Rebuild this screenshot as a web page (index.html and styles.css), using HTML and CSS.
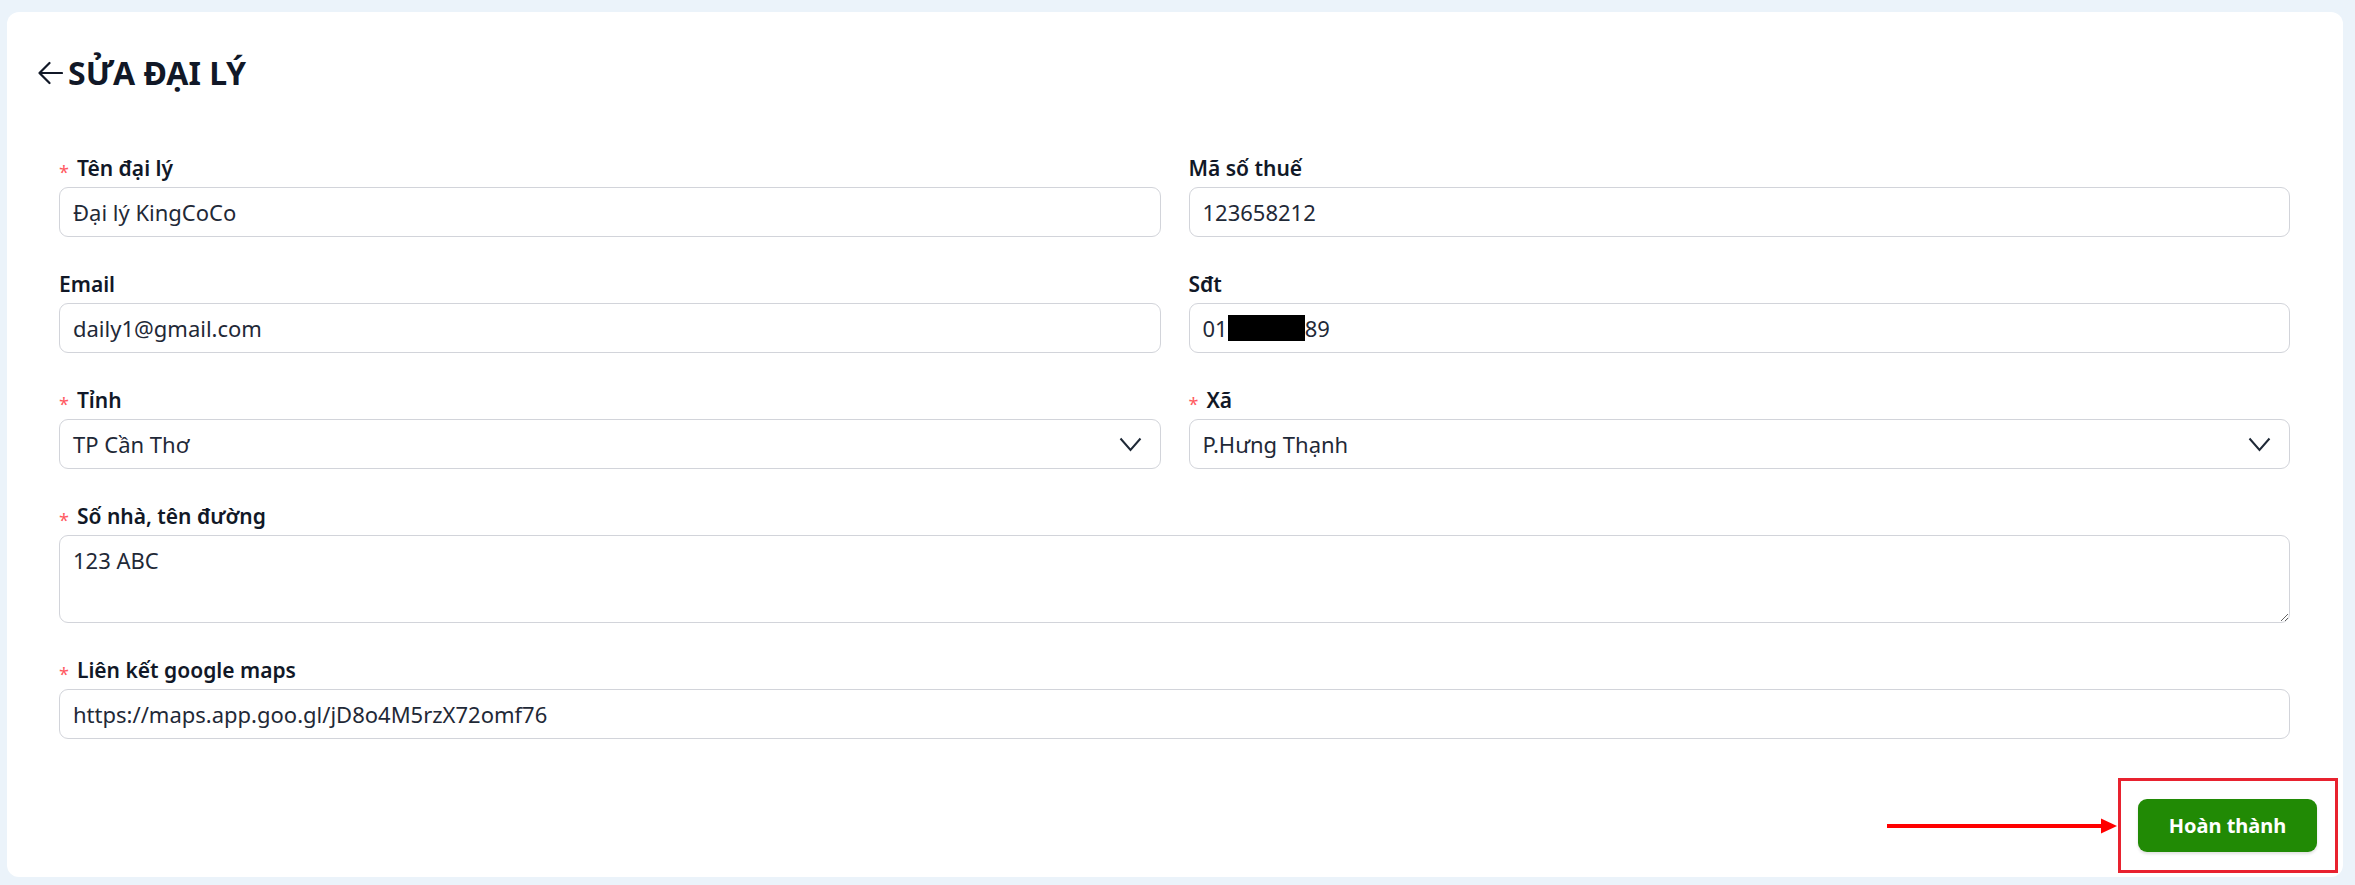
FILE: index.html
```html
<!DOCTYPE html>
<html lang="vi">
<head>
<meta charset="UTF-8" />
<meta name="viewport" content="width=device-width, initial-scale=1" />
<title>Sửa đại lý</title>
<link rel="stylesheet" href="styles.css">
</head>
<body>
  <div class="card">
    <div class="page-header">
      <svg class="back-icon" width="26" height="24" viewBox="0 0 26 24" aria-hidden="true">
        <path d="M25 12H2.5M12.5 2L2.5 12L12.5 22" fill="none" stroke="#111827" stroke-width="2.2" stroke-linecap="round" stroke-linejoin="round"/>
      </svg>
      <h1 class="page-title">SỬA ĐẠI LÝ</h1>
    </div>

    <form class="agent-form">
      <div class="field">
        <label class="field-label"><span class="req">*</span>Tên đại lý</label>
        <input class="text-input" type="text" value="Đại lý KingCoCo">
      </div>
      <div class="field">
        <label class="field-label">Mã số thuế</label>
        <input class="text-input" type="text" value="123658212">
      </div>
      <div class="field">
        <label class="field-label">Email</label>
        <input class="text-input" type="text" value="daily1@gmail.com">
      </div>
      <div class="field">
        <label class="field-label">Sđt</label>
        <div class="text-input fake-input">01<span class="redact"></span>89</div>
      </div>
      <div class="field">
        <label class="field-label"><span class="req">*</span>Tỉnh</label>
        <div class="text-input select-box">
          <span>TP Cần Thơ</span>
          <svg class="chevron" width="23" height="15" viewBox="0 0 23 15" aria-hidden="true"><path d="M1.5 1.5L11.5 13L21.5 1.5" fill="none" stroke="#1f2937" stroke-width="2"/></svg>
        </div>
      </div>
      <div class="field">
        <label class="field-label"><span class="req">*</span>Xã</label>
        <div class="text-input select-box">
          <span>P.Hưng Thạnh</span>
          <svg class="chevron" width="23" height="15" viewBox="0 0 23 15" aria-hidden="true"><path d="M1.5 1.5L11.5 13L21.5 1.5" fill="none" stroke="#1f2937" stroke-width="2"/></svg>
        </div>
      </div>
      <div class="field wide">
        <label class="field-label"><span class="req">*</span>Số nhà, tên đường</label>
        <textarea class="text-input text-area">123 ABC</textarea>
      </div>
      <div class="field wide">
        <label class="field-label"><span class="req">*</span>Liên kết google maps</label>
        <input class="text-input" type="text" value="https://maps.app.goo.gl/jD8o4M5rzX72omf76">
      </div>
    </form>

    <div class="form-footer">
      <button class="submit-btn" type="button">Hoàn thành</button>
      <!-- annotation overlay -->
      <div class="mark-box"></div>
      <svg class="mark-arrow" width="230" height="16" viewBox="0 0 230 16" aria-hidden="true">
        <line x1="0" y1="8" x2="216" y2="8" stroke="#ff0000" stroke-width="4"/>
        <polygon points="214,0.5 230,8 214,15.5" fill="#ff0000"/>
      </svg>
    </div>
  </div>
</body>
</html>
```

FILE: styles.css
```css
* {
  box-sizing: border-box;
}
html, body {
  height: 100%;
}
body {
  margin: 0;
  padding: 12px 12px 8px 7px;
  background: #ebf3fa;
  font-family: 'Noto Sans', 'Open Sans', sans-serif;
  color: #111827;
}
.card {
  background: #ffffff;
  border-radius: 12px;
  height: 865px;
}
.page-header {
  display: flex;
  align-items: center;
  gap: 5px;
  padding: 41px 30px 0 30px;
  height: 81px;
}
.back-icon {
  flex: none;
}
.page-title {
  margin: 0;
  font-size: 32px;
  line-height: 40px;
  font-weight: 700;
  color: #111827;
}
.agent-form {
  display: grid;
  grid-template-columns: 1fr 1fr;
  column-gap: 28px;
  row-gap: 32px;
  padding: 60px 53px 0 52px;
}
.field {
  display: flex;
  flex-direction: column;
}
.field.wide {
  grid-column: 1 / 3;
}
.field-label {
  display: block;
  height: 30px;
  font-size: 21px;
  line-height: 30px;
  font-weight: 600;
  color: #111827;
  margin-bottom: 4px;
}
.req {
  color: #ff5a5f;
  font-size: 18px;
  line-height: 1;
  font-weight: 400;
  margin-right: 8px;
  vertical-align: -3px;
}
.text-input {
  height: 50px;
  width: 100%;
  border: 1px solid #d2d4da;
  border-radius: 9px;
  padding: 0 13px;
  font-family: 'Noto Sans', 'Open Sans', sans-serif;
  font-size: 22px;
  color: #1f2937;
  background: #ffffff;
  outline: none;
}
.fake-input {
  display: flex;
  align-items: center;
}
.redact {
  display: inline-block;
  width: 77px;
  height: 26px;
  background: #000000;
}
.select-box {
  display: flex;
  align-items: center;
  justify-content: space-between;
  padding-right: 18px;
}
.text-area {
  height: 88px;
  padding: 8px 13px;
  line-height: 32px;
  resize: vertical;
}
.form-footer {
  position: relative;
  display: flex;
  justify-content: flex-end;
  padding: 60px 26px 25px 0;
}
.submit-btn {
  height: 53px;
  width: 179px;
  border: none;
  border-radius: 9px;
  background: #218a05;
  color: #ffffff;
  font-family: 'Noto Sans', 'Open Sans', sans-serif;
  font-size: 20px;
  font-weight: 700;
  box-shadow: 0 2px 3px rgba(0, 0, 0, 0.12);
  cursor: pointer;
}
.mark-box {
  position: absolute;
  top: 39px;
  right: 5px;
  width: 220px;
  height: 95px;
  border: 3px solid #e8222f;
}
.mark-arrow {
  position: absolute;
  top: 79px;
  right: 226px;
}
```
